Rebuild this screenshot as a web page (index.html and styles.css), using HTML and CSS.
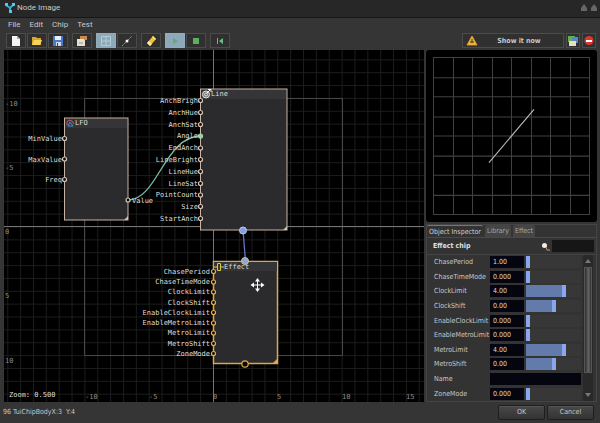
FILE: index.html
```html
<!DOCTYPE html>
<html lang="en">
<head>
<meta charset="utf-8">
<title>Node Image</title>
<link rel="stylesheet" href="styles.css">
</head>
<body>
<div class="window">
  <header class="titlebar">
    <svg class="logo" width="12" height="12" viewBox="0 0 12 12"><path d="M2 3L6 6L10 2M6 6V10" stroke="#35aed3" stroke-width="2" fill="none"/><g fill="#55c6e6"><rect x="1" y="1" width="3" height="3"/><rect x="8" y="1" width="3" height="3"/><rect x="5" y="8" width="3" height="3"/></g></svg>
    <h1>Node Image</h1>
    <svg class="caps" width="18" height="8" viewBox="0 0 18 8"><path d="M4 0L7 4V7H1V4ZM14 0L17 4V7H11V4Z" fill="#666"/></svg>
  </header>
  <nav class="menu"><a href="#">File</a><a href="#">Edit</a><a href="#">Chip</a><a href="#">Test</a></nav>
  <div class="toolbar">
    <div class="group">
      <button aria-label="New"><svg width="12" height="12" viewBox="0 0 12 12"><path d="M2 1H7L10 4V11H2Z" fill="#f4f4f4"/><path d="M7 1V4H10Z" fill="#aaa"/></svg></button>
      <button aria-label="Open"><svg width="12" height="12" viewBox="0 0 12 12"><path d="M1 2H5L6 3H10V10H1Z" fill="#d7a62d"/><path d="M3 5H11L9 10H1Z" fill="#f7d35c"/></svg></button>
      <button aria-label="Save"><svg width="12" height="12" viewBox="0 0 12 12"><path d="M1 1H11V11H1Z" fill="#4c78c8"/><path d="M3 1H9V5H3Z" fill="#e9eef8"/><path d="M4 7H9V11H4Z" fill="#cdd8ec"/><path d="M5 8H6V11H5Z" fill="#345"/></svg></button>
    </div>
    <div class="group">
      <button aria-label="Properties"><svg width="12" height="12" viewBox="0 0 12 12"><path d="M1 4H9V11H1Z" fill="#e5ded4"/><path d="M4 1H11V5H4Z" fill="#c98a52"/><path d="M1 4H8V6H1Z" fill="#f3dfc4"/><path d="M3 8H7" stroke="#998"/></svg></button>
    </div>
    <div class="group">
      <button class="on" aria-label="Grid"><svg width="12" height="12" viewBox="0 0 12 12"><path d="M1.500 1.500H10.500V10.500H1.500ZM6 1V11M1 6H11" fill="none" stroke="#b4cbd8"/></svg></button>
      <button aria-label="Snap"><svg width="12" height="12" viewBox="0 0 12 12"><path d="M1 11L5 7M7 5L11 1" stroke="#999" stroke-dasharray="2 1"/><circle cx="6" cy="6" r="1.500" fill="#fff"/></svg></button>
    </div>
    <div class="group">
      <button aria-label="Tag"><svg width="12" height="12" viewBox="0 0 12 12"><path d="M2 8L8 1L11 4L5 11Z" fill="#f2bf35"/><path d="M2 8L4 6L7 9L5 11Z" fill="#fbe8a5"/><path d="M8 1L11 4L10 5L7 2Z" fill="#ffdf6b"/></svg></button>
    </div>
    <div class="group">
      <button class="on" aria-label="Play"><svg width="12" height="12" viewBox="0 0 12 12"><path d="M4 3L9 6L4 9Z" fill="#69a67c"/></svg></button>
      <button aria-label="Stop"><svg width="12" height="12" viewBox="0 0 12 12"><path d="M3 3H9V9H3Z" fill="#5cad62"/></svg></button>
    </div>
    <div class="group">
      <button aria-label="Rewind"><svg width="12" height="12" viewBox="0 0 12 12"><path d="M3 3H4V9H3ZM9 3V9L5 6Z" fill="#6fba84"/></svg></button>
    </div>
    <div class="group end">
      <button class="show"><svg width="12" height="12" viewBox="0 0 12 12"><path d="M6 1L11 10H1Z" fill="#f0b83c" stroke="#d99a28"/><path d="M6 4V8M4 7H8" stroke="#443018"/></svg><span>Show it now</span></button>
      <button class="small" aria-label="Images"><svg width="12" height="12" viewBox="0 0 12 12"><path d="M1 1H8V7H1Z" fill="#63ad52"/><path d="M5 2H11V8H5Z" fill="#5689bf"/><path d="M2 6H9V11H2Z" fill="#e5e0b5"/></svg></button>
      <button class="small" aria-label="Remove"><svg width="12" height="12" viewBox="0 0 12 12"><circle cx="6" cy="5.500" r="4.500" fill="#d8392a"/><path d="M3 5H9V7H3Z" fill="#fff"/></svg></button>
    </div>
  </div>
  <main class="work">
    <section class="canvas" aria-label="Node canvas">
      <svg width="100%" height="100%">
        <defs>
          <pattern id="grid" x="213" y="226.500" width="12.860" height="12.860" patternUnits="userSpaceOnUse"><path d="M0 .5H13M.5 0V13" stroke="#1c1c1c" fill="none"/></pattern>
        </defs>
        <g transform="translate(-4 -50)">
          <rect width="100%" height="100%" x="4" y="50" fill="url(#grid)"/>
          <path d="M84.500 98.500H342.500V355.500H84.500Z" fill="none" stroke="#484848"/>
          <path d="M213.500 50V3000M4 226.500H3000" stroke="#747474"/>
          <g class="axis">
            <text x="5" y="106">-10</text><text x="5" y="170">-5</text><text x="5" y="234">0</text><text x="5" y="298">5</text><text x="5" y="363">10</text>
            <text x="85" y="399">-10</text><text x="149" y="399">-5</text><text x="213" y="399">0</text><text x="277" y="399">5</text><text x="342" y="399">10</text><text x="406" y="399">15</text>
          </g>
          <text x="9" y="397">Zoom: 0.500</text>

          <g fill="#2b2a2c" stroke="#c9b4a6">
            <rect x="64.500" y="118" width="63.500" height="102"/>
            <rect x="200.500" y="89" width="86.500" height="141"/>
          </g>
          <rect x="213.500" y="261.500" width="64" height="102" fill="#2b2a2c" stroke="#d9a94c" stroke-width="1.500"/>
          <path d="M65 119H127V128H65ZM201 90H286V99H201ZM214 262H277V271H214Z" fill="#353537"/>
          <path d="M128 216V220H124ZM287 226V230H283Z" fill="#c9c0b4"/><path d="M277 359V363H273Z" fill="#d9a94c"/>

          <path d="M67 125V122L69 120L72 121L74 124" fill="none" stroke="#c25a68"/><path d="M68 126L70 122L73 126Z" fill="none" stroke="#478fd0"/>
          <circle cx="206" cy="94.500" r="3.500" fill="#777" stroke="#e4e4e4"/><circle cx="206" cy="94.500" r="1.500" fill="none" stroke="#ddd"/><path d="M207 93L211 89M208 89.500H211V92" fill="none" stroke="#fff"/>
          <path d="M217.500 263.500H220.500V270.500H217.500ZM214 267H217M221 267H224" fill="none" stroke="#d9cc3c"/>

          <path d="M128 200C158 200 164 136 201 136" fill="none" stroke="#7bbfa4" stroke-width="1.300"/>
          <path d="M243 230L245.500 261" stroke="#6874c4" stroke-width="1.300"/>

          <g>
            <text x="75" y="125">LFO</text><text x="211" y="96">Line</text><text x="224" y="269">Effect</text><text x="132" y="203">Value</text>
          </g>
          <g class="ports">
            <text x="62" y="141">MinValue</text><text x="62" y="162">MaxValue</text><text x="62" y="182">Freq</text>
            <text x="198" y="103">AnchBrigh</text><text x="198" y="115">AnchHue</text><text x="198" y="127">AnchSat</text><text x="198" y="138">Angle</text><text x="198" y="150">EndAnch</text><text x="198" y="162">LineBright</text><text x="198" y="174">LineHue</text><text x="198" y="186">LineSat</text><text x="198" y="197">PointCount</text><text x="198" y="209">Size</text><text x="198" y="221">StartAnch</text>
            <text x="210" y="274">ChasePeriod</text><text x="210" y="284">ChaseTimeMode</text><text x="210" y="294">ClockLimit</text><text x="210" y="305">ClockShift</text><text x="210" y="315">EnableClockLimit</text><text x="210" y="325">EnableMetroLimit</text><text x="210" y="335">MetroLimit</text><text x="210" y="346">MetroShift</text><text x="210" y="356">ZoneMode</text>
          </g>
          <g fill="#0b0b0b" stroke="#d6c3b0" stroke-width="1.200">
            <circle cx="64.500" cy="138.500" r="2"/><circle cx="64.500" cy="159" r="2"/><circle cx="64.500" cy="179.500" r="2"/><circle cx="128" cy="200" r="2"/>
            <circle cx="200.500" cy="100.500" r="2"/><circle cx="200.500" cy="112.500" r="2"/><circle cx="200.500" cy="124.500" r="2"/><circle cx="200.500" cy="136" r="2" fill="#8fd0a4" stroke="#a8d5ac"/><circle cx="200.500" cy="148" r="2"/><circle cx="200.500" cy="159.500" r="2"/><circle cx="200.500" cy="171.500" r="2"/><circle cx="200.500" cy="183.500" r="2"/><circle cx="200.500" cy="195" r="2"/><circle cx="200.500" cy="206.500" r="2"/><circle cx="200.500" cy="218.500" r="2"/>
          </g>
          <g fill="#0b0b0b" stroke="#e0ad4b" stroke-width="1.200">
            <circle cx="213.500" cy="271.500" r="2"/><circle cx="213.500" cy="282" r="2"/><circle cx="213.500" cy="292" r="2"/><circle cx="213.500" cy="302.500" r="2"/><circle cx="213.500" cy="312.500" r="2"/><circle cx="213.500" cy="323" r="2"/><circle cx="213.500" cy="333" r="2"/><circle cx="213.500" cy="343.500" r="2"/><circle cx="213.500" cy="353.500" r="2"/><circle cx="245" cy="364" r="3.200"/>
          </g>
          <circle cx="243" cy="230.500" r="3.500" fill="#7fa0e6" stroke="#c6c6d6"/><circle cx="245" cy="261" r="3.500" fill="#8ea4dc" stroke="#d8bd84"/>
          <path d="M257.500 280V290M252.500 285H262.500" stroke="#fff"/><path d="M257.500 278L260 281.500H255ZM257.500 292L260 288.500H255ZM250.500 285L254 282.500V287.500ZM264.500 285L261 282.500V287.500Z" fill="#fff"/>
        </g>
      </svg>
    </section>
    <aside class="side">
      <div class="preview">
        <svg viewBox="0 0 157 157" preserveAspectRatio="none"><path d="M.5 .5H156.500V156.500H.5ZM20.500 0V157M39.500 0V157M59.500 0V157M78.500 0V157M98.500 0V157M117.500 0V157M137.500 0V157M0 20.500H157M0 39.500H157M0 59.500H157M0 78.500H157M0 98.500H157M0 117.500H157M0 137.500H157" fill="none" stroke="#404040"/><path d="M56 105L101 52" stroke="#c4c4c4"/></svg>
      </div>
      <section class="inspector">
        <div class="tabs"><button class="active">Object Inspector</button><button>Library</button><button>Effect</button></div>
        <div class="head"><h2>Effect chip</h2><label for="q" aria-label="Search"><svg width="9" height="9" viewBox="0 0 9 9"><circle cx="3.500" cy="3.500" r="2.500" fill="#eee"/><path d="M5 5L6 8H9" stroke="#c69a50" fill="none"/></svg></label><input id="q" type="text"></div>
        <div class="body">
          <div class="rows">
            <div class="row"><label for="p0">ChasePeriod</label><input id="p0" type="text" value="1.00"><input type="range" aria-label="ChasePeriod slider" value="0" style="--v:0%"></div>
            <div class="row"><label for="p1">ChaseTimeMode</label><input id="p1" type="text" value="0.000"><input type="range" aria-label="ChaseTimeMode slider" value="0" style="--v:0%"></div>
            <div class="row"><label for="p2">ClockLimit</label><input id="p2" type="text" value="4.00"><input type="range" aria-label="ClockLimit slider" value="70" style="--v:70%"></div>
            <div class="row"><label for="p3">ClockShift</label><input id="p3" type="text" value="0.00"><input type="range" aria-label="ClockShift slider" value="50" style="--v:50%"></div>
            <div class="row"><label for="p4">EnableClockLimit</label><input id="p4" type="text" value="0.000"><input type="range" aria-label="EnableClockLimit slider" value="0" style="--v:0%"></div>
            <div class="row"><label for="p5">EnableMetroLimit</label><input id="p5" type="text" value="0.000"><input type="range" aria-label="EnableMetroLimit slider" value="0" style="--v:0%"></div>
            <div class="row"><label for="p6">MetroLimit</label><input id="p6" type="text" value="4.00"><input type="range" aria-label="MetroLimit slider" value="70" style="--v:70%"></div>
            <div class="row"><label for="p7">MetroShift</label><input id="p7" type="text" value="0.00"><input type="range" aria-label="MetroShift slider" value="50" style="--v:50%"></div>
            <div class="row"><label for="p8">Name</label><input id="p8" class="wide" type="text"></div>
            <div class="row"><label for="p9">ZoneMode</label><input id="p9" type="text" value="0.000"><input type="range" aria-label="ZoneMode slider" value="0" style="--v:0%"></div>
          </div>
          <div class="scroll"><svg width="6" height="4" viewBox="0 0 6 4"><path d="M3 0L6 4H0Z" fill="#777"/></svg><div class="track"><div class="thumb"></div></div><svg width="6" height="4" viewBox="0 0 6 4"><path d="M0 0H6L3 4Z" fill="#777"/></svg></div>
        </div>
      </section>
    </aside>
  </main>
  <footer class="status"><span>96 TuiChipBodyX:3&nbsp; Y:4</span><button>OK</button><button>Cancel</button></footer>
</div>
</body>
</html>
```
FILE: styles.css
```css
* { box-sizing: border-box; }
body { margin: 0; background: #353535; color: #c8c8c8; font: 7px/12px "DejaVu Sans Condensed", "Noto Sans", sans-serif; }
button, input { font: inherit; color: inherit; margin: 0; padding: 0; border: 0; border-radius: 0; min-width: 0; }
svg { display: block; flex: none; }
h1, h2 { margin: 0; }
.window { display: flex; flex-direction: column; height: 100vh; }

.titlebar { display: flex; align-items: center; gap: 1px; height: 18px; padding: 0 2px 1px 4px; background: #272727; border-bottom: 1px solid #161616; }
.titlebar h1 { flex: 1; font: 8px/12px Roboto, sans-serif; }
.menu { display: flex; gap: 9px; height: 15px; padding-left: 8px; font: 8px/14px Roboto, sans-serif; }
.menu a { color: inherit; text-decoration: none; }

.toolbar { display: flex; gap: 4px; height: 17px; padding: 0 4px 2px 6px; }
.group { display: flex; gap: 1px; }
.group.end { margin-left: auto; gap: 2px; }
.toolbar button { display: flex; align-items: center; justify-content: center; width: 20px; height: 15px; background: #303030; border: 1px solid #4b4b4b; }
.toolbar .on { background: #8ba9b8; border-color: #91adbc; }
.toolbar .small { width: 14px; }
.toolbar .show { width: 102px; padding: 0 3px; font: bold 7px/12px "DejaVu Sans Condensed", sans-serif; }
.show span { flex: 1; text-align: center; }

.work { flex: 1; min-height: 0; display: flex; gap: 2px; padding: 0 3px 0 4px; }
.canvas { flex: 1; min-width: 0; overflow: hidden; background: #000; }
.canvas text { font: 7px "DejaVu Sans Mono", monospace; fill: #dedede; }
.canvas .axis text { fill: #8c8c8c; }
.canvas .ports text { text-anchor: end; }

.side { display: flex; flex-direction: column; gap: 2px; width: 171px; }
.preview { height: 172px; padding: 7px; background: #000; border-radius: 3px; }
.preview svg { width: 100%; height: 100%; }

.inspector { flex: 1; min-height: 0; display: flex; flex-direction: column; background: #333; border: 1px solid #454545; }
.tabs { display: flex; gap: 2px; height: 13px; border-bottom: 1px solid #4a4a4a; }
.tabs button { padding: 0 2px; line-height: 12px; background: #454545; color: #a5a5a5; border-radius: 2px 2px 0 0; }
.tabs .active { background: #333; color: #d0d0d0; border-top: 1px solid #777; }
.head { display: flex; align-items: center; gap: 2px; height: 17px; padding: 0 2px 0 6px; border-bottom: 1px solid #444; }
.head h2 { flex: 1; font: bold 7px/12px "DejaVu Sans Condensed", sans-serif; color: #e0e0e0; }
.head input { width: 42px; height: 12px; background: #161616; }
.body { flex: 1; min-height: 0; display: flex; gap: 2px; padding-right: 3px; }
.rows { flex: 1; display: grid; grid-auto-rows: 1fr; }
.row { display: grid; grid-template-columns: 54px 34px 1fr; column-gap: 2px; align-items: center; padding-left: 7px; }
.row label { white-space: nowrap; }
.row input { width: 100%; height: 12px; }
.row input[type=text] { padding: 0 3px; background: #05050f; color: #dcdcdc; }
.row .wide { grid-column: 2 / 4; }
.row input[type=range] { appearance: none; background: linear-gradient(#637baa, #637baa) 0 0 / var(--v) 100% no-repeat #373737; }
.row input[type=range]::-webkit-slider-thumb { appearance: none; width: 4px; height: 12px; background: #88a7ee; }
.scroll { display: flex; flex-direction: column; align-items: center; gap: 4px; width: 10px; padding: 4px 0; background: #292929; }
.track { flex: 1; width: 8px; }
.thumb { height: 87%; background: linear-gradient(90deg, #303030, #626466 60%, #333); border: 1px solid #555; }

.status { display: flex; align-items: center; gap: 2px; height: 21px; padding: 0 6px 1px 3px; }
.status span { flex: 1; }
.status button { width: 47px; height: 15px; background: linear-gradient(#484848, #343434); border: 1px solid #1e1e1e; box-shadow: inset 0 1px #555; border-radius: 2px; }
```
